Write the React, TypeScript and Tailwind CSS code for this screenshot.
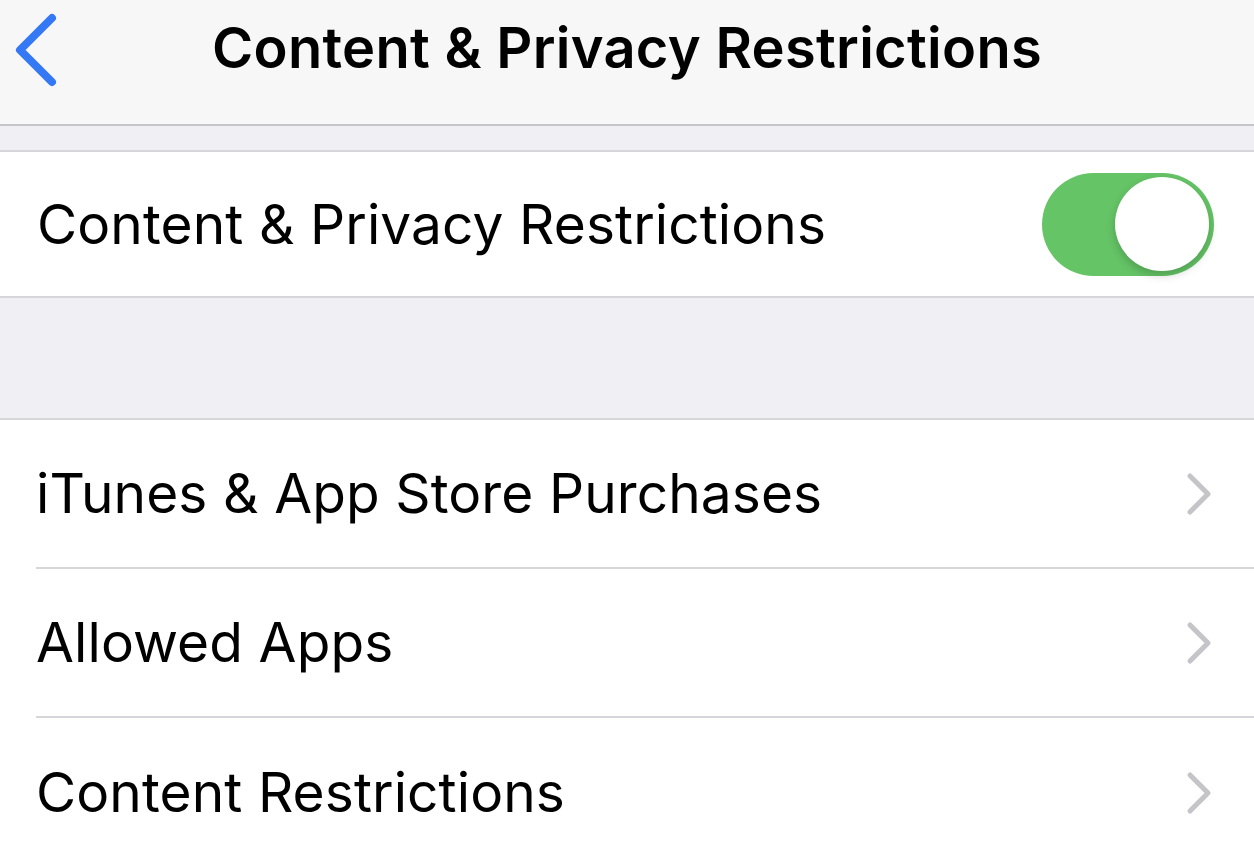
import React from "react";

const font = { fontFamily: "Inter, 'Noto Sans', sans-serif" };

function Chevron() {
  return (
    <svg width="30" height="44" viewBox="0 0 30 44" className="shrink-0">
      <path d="M6 4 L24 22 L6 40" fill="none" stroke="#c4c4c9" strokeWidth="5" strokeLinecap="round" strokeLinejoin="round" />
    </svg>
  );
}

function LinkRow({ label, last }: { label: string; last?: boolean }) {
  return (
    <div className="flex h-[149px] items-stretch bg-white pl-[36px]">
      <div className={`flex flex-1 items-center justify-between pr-[40px] ${last ? "" : "border-b-2 border-[#d6d6da]"}`}>
        <span className="text-[55px] text-black tracking-[0.1px]">{label}</span>
        <Chevron />
      </div>
    </div>
  );
}

export default function App() {
  return (
    <div className="w-[1254px] h-[860px] overflow-hidden bg-[#efeff4]" style={font}>
      <div className="relative flex h-[126px] items-center justify-center border-b-2 border-[#c6c6ca] bg-[#f7f7f7]">
        <svg width="50" height="80" viewBox="0 0 50 80" className="absolute left-[8px] top-[10px]">
          <path d="M44 8 L12 40 L44 72" fill="none" stroke="#3478f6" strokeWidth="8" strokeLinecap="round" strokeLinejoin="round" />
        </svg>
        <h1 className="-mt-[28px] text-[56px] font-semibold tracking-[0.3px] text-black">Content &amp; Privacy Restrictions</h1>
      </div>
      <div className="h-[24px]" />
      <div className="flex h-[148px] items-center justify-between border-y-2 border-[#d6d6da] bg-white pl-[37px] pr-[40px]">
        <span className="text-[55px] text-black tracking-[0.1px]">Content &amp; Privacy Restrictions</span>
        <div className="flex h-[103px] w-[172px] items-center justify-end rounded-full bg-[#65c466] p-[5px]">
          <div className="h-[94px] w-[94px] rounded-full bg-white shadow-[0_4px_10px_rgba(0,0,0,0.2)]" />
        </div>
      </div>
      <div className="h-[120px]" />
      <div className="border-t-2 border-[#d6d6da] bg-white">
        <LinkRow label="iTunes & App Store Purchases" />
        <LinkRow label="Allowed Apps" />
        <LinkRow label="Content Restrictions" last />
      </div>
    </div>
  );
}
